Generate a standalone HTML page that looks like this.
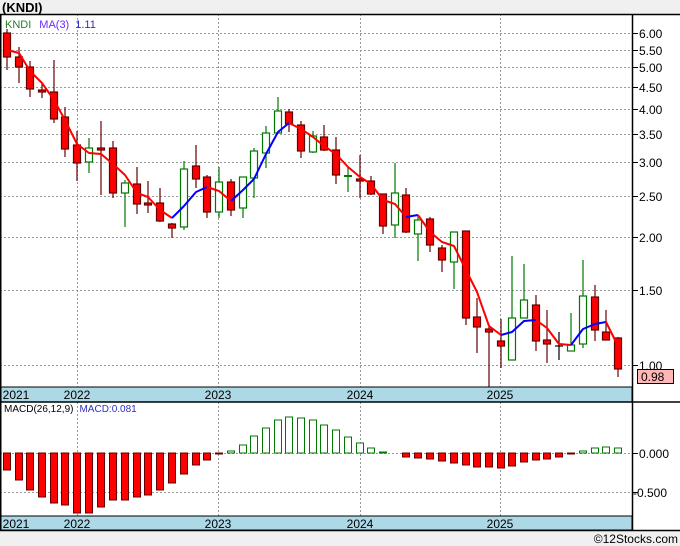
<!DOCTYPE html><html><head><style>body{margin:0;background:#fff}svg{display:block;font-family:"Liberation Sans",sans-serif}</style></head><body>
<svg width="680" height="546" viewBox="0 0 680 546" xmlns="http://www.w3.org/2000/svg">
<rect x="0" y="0" width="680" height="546" fill="#fff"/>
<rect x="0" y="0" width="680" height="14" fill="#f0f0f0"/>
<rect x="0" y="531" width="680" height="15" fill="#f0f0f0"/>
<text x="2" y="12" font-size="13" font-weight="bold">(KNDI)</text>
<g stroke="#999" stroke-dasharray="2,2" stroke-width="1">
<line x1="0" x2="632" y1="33.5" y2="33.5"/><line x1="0" x2="632" y1="50.5" y2="50.5"/><line x1="0" x2="632" y1="67.5" y2="67.5"/><line x1="0" x2="632" y1="87.5" y2="87.5"/><line x1="0" x2="632" y1="109.5" y2="109.5"/><line x1="0" x2="632" y1="134.5" y2="134.5"/><line x1="0" x2="632" y1="162.5" y2="162.5"/><line x1="0" x2="632" y1="196.5" y2="196.5"/><line x1="0" x2="632" y1="237.5" y2="237.5"/><line x1="0" x2="632" y1="290.5" y2="290.5"/><line x1="0" x2="632" y1="365.5" y2="365.5"/>
<line x1="0" x2="632" y1="453.5" y2="453.5"/><line x1="0" x2="632" y1="492.5" y2="492.5"/>
<line x1="77.5" x2="77.5" y1="14" y2="516"/><line x1="218.5" x2="218.5" y1="14" y2="516"/><line x1="360.5" x2="360.5" y1="14" y2="516"/><line x1="500.5" x2="500.5" y1="14" y2="516"/>
</g>
<text x="5" y="28" font-size="11"><tspan fill="#2a7a2a">KNDI</tspan><tspan fill="#6a2aff" dx="8">MA(3)</tspan><tspan fill="#3030c0" dx="6">1.11</tspan></text>
<g id="c" stroke-width="1.2">
<!-- candles -->
<g stroke="#600" fill="#f00">
<line x1="7" x2="7" y1="29" y2="70"/><rect x="3.5" y="33" width="7" height="24"/>
<line x1="19" x2="19" y1="47" y2="83"/><rect x="15.5" y="57" width="7" height="10"/>
<line x1="30" x2="30" y1="61" y2="97"/><rect x="26.5" y="67" width="7" height="22"/>
<line x1="42" x2="42" y1="83" y2="98"/><rect x="38.5" y="90" width="7" height="2"/>
<line x1="54" x2="54" y1="60" y2="123"/><rect x="50.5" y="92" width="7" height="27"/>
<line x1="65" x2="65" y1="107" y2="157"/><rect x="61.5" y="117" width="7" height="32"/>
<line x1="77" x2="77" y1="131" y2="181"/><rect x="73.5" y="145" width="7" height="18"/>
<line x1="101" x2="101" y1="121" y2="195"/><rect x="97.5" y="148" width="7" height="2"/>
<line x1="113" x2="113" y1="141" y2="198"/><rect x="109.5" y="148" width="7" height="45"/>
<line x1="137" x2="137" y1="167" y2="214"/><rect x="133.5" y="184" width="7" height="20"/>
<line x1="148" x2="148" y1="181" y2="213"/><rect x="144.5" y="203" width="7" height="2"/>
<line x1="160" x2="160" y1="188" y2="222"/><rect x="156.5" y="203" width="7" height="18"/>
<line x1="172" x2="172" y1="223" y2="238"/><rect x="168.5" y="224" width="7" height="4"/>
<line x1="196" x2="196" y1="145" y2="188"/><rect x="192.5" y="166" width="7" height="13"/>
<line x1="207" x2="207" y1="175" y2="218"/><rect x="203.5" y="177" width="7" height="35"/>
<line x1="231" x2="231" y1="179" y2="216"/><rect x="227.5" y="182" width="7" height="28"/>
<line x1="289" x2="289" y1="109" y2="132"/><rect x="285.5" y="112" width="7" height="12"/>
<line x1="301" x2="301" y1="121" y2="158"/><rect x="297.5" y="125" width="7" height="26"/>
<line x1="324" x2="324" y1="125" y2="151"/><rect x="320.5" y="137" width="7" height="13"/>
<line x1="336" x2="336" y1="137" y2="184"/><rect x="332.5" y="150" width="7" height="25"/>
<line x1="360" x2="360" y1="155" y2="198"/><rect x="356.5" y="179" width="7" height="2"/>
<line x1="371" x2="371" y1="176" y2="195"/><rect x="367.5" y="181" width="7" height="13"/>
<line x1="383" x2="383" y1="194" y2="234"/><rect x="379.5" y="194" width="7" height="32"/>
<line x1="406" x2="406" y1="188" y2="233"/><rect x="402.5" y="195" width="7" height="37"/>
<line x1="430" x2="430" y1="217" y2="252"/><rect x="426.5" y="219" width="7" height="26"/>
<line x1="442" x2="442" y1="245" y2="272"/><rect x="438.5" y="248" width="7" height="12"/>
<line x1="466" x2="466" y1="231" y2="325"/><rect x="462.5" y="231" width="7" height="87"/>
<line x1="477" x2="477" y1="298" y2="353"/><rect x="473.5" y="317" width="7" height="10"/>
<line x1="489" x2="489" y1="327" y2="387"/><rect x="485.5" y="329" width="7" height="3"/>
<line x1="501" x2="501" y1="319" y2="368"/><rect x="497.5" y="341" width="7" height="5"/>
<line x1="536" x2="536" y1="295" y2="351"/><rect x="532.5" y="305" width="7" height="36"/>
<line x1="547" x2="547" y1="310" y2="363"/><rect x="543.5" y="340" width="7" height="4"/>
<line x1="595" x2="595" y1="285" y2="341"/><rect x="591.5" y="297" width="7" height="33"/>
<line x1="606" x2="606" y1="310" y2="340"/><rect x="602.5" y="332" width="7" height="8"/>
<line x1="618" x2="618" y1="337" y2="377"/><rect x="614.5" y="338" width="7" height="31"/>
</g>
<g stroke="#070" fill="#fff">
<line x1="89" x2="89" y1="138" y2="173"/><rect x="85.5" y="148" width="7" height="14"/>
<line x1="125" x2="125" y1="180" y2="227"/><rect x="121.5" y="183" width="7" height="10"/>
<line x1="184" x2="184" y1="161" y2="230"/><rect x="180.5" y="169" width="7" height="58"/>
<line x1="219" x2="219" y1="167" y2="218"/><rect x="215.5" y="182" width="7" height="30"/>
<line x1="243" x2="243" y1="177" y2="218"/><rect x="239.5" y="177" width="7" height="31"/>
<line x1="254" x2="254" y1="148" y2="198"/><rect x="250.5" y="151" width="7" height="27"/>
<line x1="266" x2="266" y1="126" y2="168"/><rect x="262.5" y="133" width="7" height="20"/>
<line x1="278" x2="278" y1="97" y2="133"/><rect x="274.5" y="111" width="7" height="22"/>
<line x1="313" x2="313" y1="131" y2="153"/><rect x="309.5" y="136" width="7" height="16"/>
<line x1="348" x2="348" y1="167" y2="192"/><line x1="344" x2="352" y1="176" y2="176" stroke-width="2"/>
<line x1="395" x2="395" y1="163" y2="238"/><rect x="391.5" y="193" width="7" height="32"/>
<line x1="418" x2="418" y1="215" y2="261"/><rect x="414.5" y="220" width="7" height="14"/>
<line x1="454" x2="454" y1="232" y2="289"/><rect x="450.5" y="232" width="7" height="30"/>
<line x1="512" x2="512" y1="256" y2="360"/><rect x="508.5" y="318" width="7" height="42"/>
<line x1="524" x2="524" y1="264" y2="318"/><rect x="520.5" y="300" width="7" height="18"/>
<line x1="571" x2="571" y1="313" y2="351"/><rect x="567.5" y="345" width="7" height="6"/>
<line x1="583" x2="583" y1="260" y2="348"/><rect x="579.5" y="296" width="7" height="48"/>
</g>
<g stroke="#000"><line x1="559" x2="559" y1="332" y2="360"/><line x1="555" x2="563" y1="346" y2="346"/></g>
</g>
<g fill="none" stroke-width="2" stroke-linejoin="round">
<polyline stroke="#f00" points="7,50 19,53 30,71 42,83 54,100 65,120 77,144 89,153 101,154 113,164 125,175 137,193 148,197 160,210 172,218"/>
<polyline stroke="#00f" points="172,218 184,206 196,192 207,187"/>
<polyline stroke="#f00" points="207,187 219,191 231,201"/>
<polyline stroke="#00f" points="231,201 243,190 254,179 266,154 278,132 289,123"/>
<polyline stroke="#f00" points="289,123 301,129 313,137 324,146 336,154 348,167 360,177 371,184 383,200 395,204 406,217"/>
<polyline stroke="#00f" points="406,217 418,215"/>
<polyline stroke="#f00" points="418,215 430,232 442,242 454,246 466,270 477,292 489,326 501,335"/>
<polyline stroke="#00f" points="501,335 512,332 524,321 536,320"/>
<polyline stroke="#f00" points="536,320 547,328 559,344 571,345"/>
<polyline stroke="#00f" points="571,345 583,329 595,324 606,322"/>
<polyline stroke="#f00" points="606,322 618,346"/>
</g>
<!-- date bands -->
<rect x="0" y="387" width="632" height="15" fill="#add8e6" stroke="#000"/>
<rect x="0" y="516" width="632" height="14" fill="#add8e6" stroke="#000"/>
<g font-size="12" fill="#000" text-anchor="middle">
<text x="16" y="399">2021</text><text x="77" y="399">2022</text><text x="218" y="399">2023</text><text x="360" y="399">2024</text><text x="500" y="399">2025</text>
<text x="16" y="528">2021</text><text x="77" y="528">2022</text><text x="218" y="528">2023</text><text x="360" y="528">2024</text><text x="500" y="528">2025</text>
</g>
<!-- MACD -->
<text x="4" y="412" font-size="10"><tspan fill="#000">MACD(26,12,9)</tspan><tspan fill="#3030c0" dx="6">MACD:0.081</tspan></text>
<g fill="#f00" stroke="#600">
<rect x="3.5" y="453" width="7" height="17"/><rect x="15.5" y="453" width="7" height="27"/><rect x="26.5" y="453" width="7" height="37"/><rect x="38.5" y="453" width="7" height="44"/><rect x="50.5" y="453" width="7" height="50"/><rect x="61.5" y="453" width="7" height="52"/><rect x="73.5" y="453" width="7" height="60"/><rect x="85.5" y="453" width="7" height="60"/><rect x="97.5" y="453" width="7" height="54"/><rect x="109.5" y="453" width="7" height="47"/><rect x="121.5" y="453" width="7" height="47"/><rect x="133.5" y="453" width="7" height="44"/><rect x="144.5" y="453" width="7" height="42"/><rect x="156.5" y="453" width="7" height="37"/><rect x="168.5" y="453" width="7" height="30"/><rect x="180.5" y="453" width="7" height="21"/><rect x="192.5" y="453" width="7" height="12"/><rect x="203.5" y="453" width="7" height="7"/><rect x="215.5" y="453" width="7" height="1"/>
<rect x="402.5" y="453" width="7" height="4"/><rect x="414.5" y="453" width="7" height="5"/><rect x="426.5" y="453" width="7" height="6"/><rect x="438.5" y="453" width="7" height="8"/><rect x="450.5" y="453" width="7" height="10"/><rect x="462.5" y="453" width="7" height="12"/><rect x="473.5" y="453" width="7" height="14"/><rect x="485.5" y="453" width="7" height="14"/><rect x="497.5" y="453" width="7" height="15"/><rect x="508.5" y="453" width="7" height="13"/><rect x="520.5" y="453" width="7" height="9"/><rect x="532.5" y="453" width="7" height="7"/><rect x="543.5" y="453" width="7" height="6"/><rect x="555.5" y="453" width="7" height="4"/><rect x="567.5" y="453" width="7" height="1"/>
</g>
<g fill="#fff" stroke="#070">
<rect x="227.5" y="451" width="7" height="2"/><rect x="239.5" y="445" width="7" height="8"/><rect x="250.5" y="436" width="7" height="17"/><rect x="262.5" y="428" width="7" height="25"/><rect x="274.5" y="420" width="7" height="33"/><rect x="285.5" y="417" width="7" height="36"/><rect x="297.5" y="418" width="7" height="35"/><rect x="309.5" y="420" width="7" height="33"/><rect x="320.5" y="425" width="7" height="28"/><rect x="332.5" y="430" width="7" height="23"/><rect x="344.5" y="437" width="7" height="16"/><rect x="356.5" y="443" width="7" height="10"/><rect x="367.5" y="448" width="7" height="5"/><rect x="379.5" y="452" width="7" height="1"/>
<rect x="579.5" y="451" width="7" height="2"/><rect x="591.5" y="448" width="7" height="5"/><rect x="602.5" y="447" width="7" height="6"/><rect x="614.5" y="448" width="7" height="5"/>
</g>
<!-- frame -->
<g stroke="#000" stroke-width="1.5" fill="none">
<line x1="0" x2="680" y1="14.5" y2="14.5"/><line x1="0" x2="680" y1="402" y2="402"/><line x1="0" x2="680" y1="530.5" y2="530.5"/>
<line x1="632.5" x2="632.5" y1="14" y2="531"/><line x1="0.75" x2="0.75" y1="14" y2="531"/>
</g>
<g stroke="#000">
<line x1="632" x2="638" y1="33.5" y2="33.5"/><line x1="632" x2="638" y1="50.5" y2="50.5"/><line x1="632" x2="638" y1="67.5" y2="67.5"/><line x1="632" x2="638" y1="87.5" y2="87.5"/><line x1="632" x2="638" y1="109.5" y2="109.5"/><line x1="632" x2="638" y1="134.5" y2="134.5"/><line x1="632" x2="638" y1="162.5" y2="162.5"/><line x1="632" x2="638" y1="196.5" y2="196.5"/><line x1="632" x2="638" y1="237.5" y2="237.5"/><line x1="632" x2="638" y1="290.5" y2="290.5"/><line x1="632" x2="638" y1="365.5" y2="365.5"/>
<line x1="632" x2="638" y1="453.5" y2="453.5"/><line x1="632" x2="638" y1="492.5" y2="492.5"/>
</g>
<g font-size="12" fill="#000">
<text x="639" y="38">6.00</text><text x="639" y="55">5.50</text><text x="639" y="72">5.00</text><text x="639" y="92">4.50</text><text x="639" y="114">4.00</text><text x="639" y="139">3.50</text><text x="639" y="167">3.00</text><text x="639" y="201">2.50</text><text x="639" y="242">2.00</text><text x="639" y="295">1.50</text><text x="639" y="370">1.00</text>
<text x="639" y="458">0.000</text><text x="633" y="497">-0.500</text>
</g>
<rect x="637.5" y="369.5" width="36" height="14" fill="#ffb6b6" stroke="#000"/>
<text x="641" y="381" font-size="12">0.98</text>
<text x="678" y="543" font-size="12" text-anchor="end" fill="#000">©12Stocks.com</text>
</svg>
</body></html>
